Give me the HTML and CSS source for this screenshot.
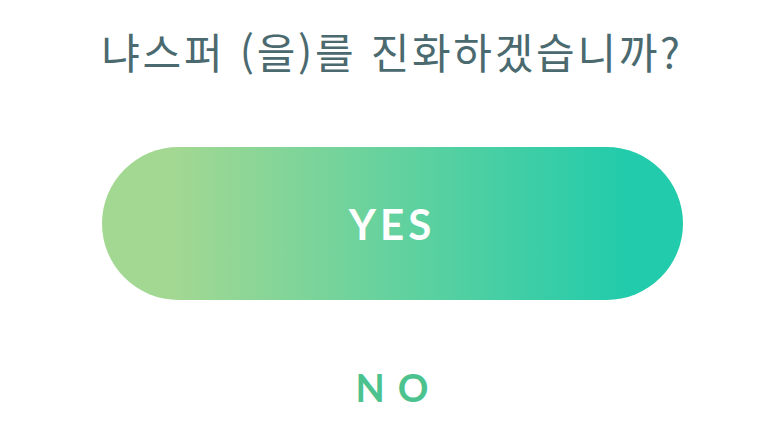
FILE: index.html
```html
<!DOCTYPE html>
<html lang="ko">
<head>
<meta charset="utf-8">
<link rel="stylesheet" href="styles.css">
</head>
<body>
<main class="dialog">
  <h1 class="title">냐스퍼 (을)를 진화하겠습니까?</h1>
  <button class="btn-yes">YES</button>
  <button class="btn-no">NO</button>
</main>
</body>
</html>
```
FILE: styles.css
```css
html, body {
  margin: 0;
  padding: 0;
  background: #ffffff;
}
.dialog {
  width: 779px;
  height: 431px;
  display: flex;
  flex-direction: column;
  align-items: center;
  box-sizing: border-box;
  padding-top: 21px;
  padding-left: 5px;
}
.title {
  margin: 0;
  font-family: "Noto Sans CJK KR", "Noto Sans", sans-serif;
  font-weight: 400;
  font-size: 42px;
  line-height: 60px;
  color: #4b6a6f;
  letter-spacing: 2.7px;
}
.btn-yes {
  margin-top: 66px;
  width: 581px;
  height: 153px;
  border: none;
  border-radius: 77px;
  background: linear-gradient(90deg, #a3d892 12%, #22cbab 90%);
  color: #ffffff;
  font-family: Lato, "Liberation Sans", sans-serif;
  font-weight: 700;
  font-size: 42px;
  letter-spacing: 4px;
  padding: 0;
}
.btn-no {
  margin-top: 62px;
  border: none;
  background: none;
  padding: 0 0 0 13px;
  color: #4cc38f;
  font-family: Lato, "Liberation Sans", sans-serif;
  font-weight: 700;
  font-size: 38px;
  letter-spacing: 13px;
  line-height: 50px;
}
```
